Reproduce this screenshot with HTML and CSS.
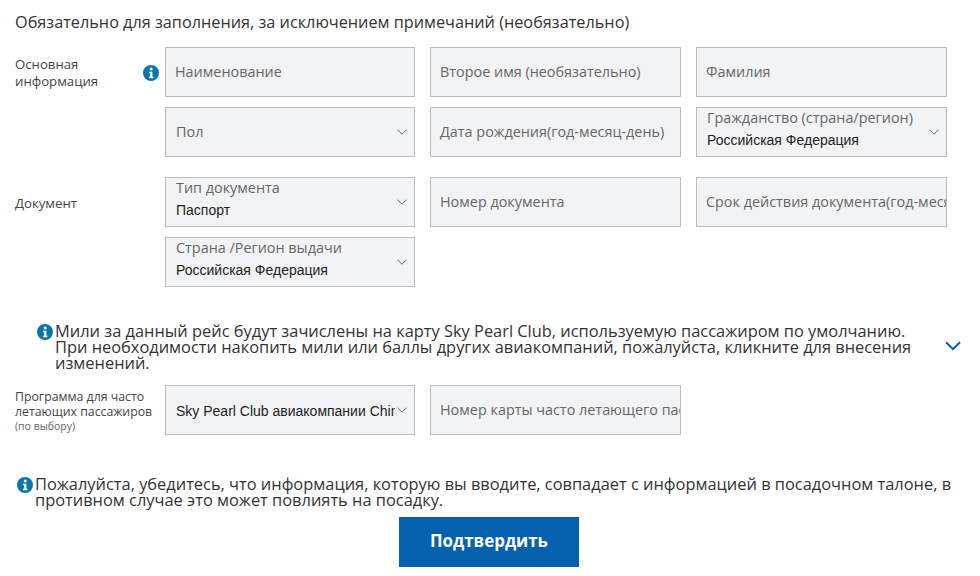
FILE: index.html
```html
<!DOCTYPE html>
<html lang="ru">
<head>
<meta charset="utf-8">
<title>Форма</title>
<link rel="stylesheet" href="styles.css">
</head>
<body>
<svg class="defs" width="0" height="0">
  <symbol id="info" viewBox="0 0 16 16">
    <circle cx="8" cy="8" r="8" fill="#0b77a8"/>
    <circle cx="8.2" cy="4.1" r="1.5" fill="#fff"/>
    <path d="M5.9 6.8h3.5v5h1v1.5H6v-1.5h1.1V8.3H5.9z" fill="#fff"/>
  </symbol>
  <symbol id="chev" viewBox="0 0 10 6">
    <path d="M.5.7 5 5.2 9.5.7" fill="none" stroke="#666" stroke-width="1"/>
  </symbol>
</svg>
<main class="page">
  <p class="title">Обязательно для заполнения, за исключением примечаний (необязательно)</p>

  <section class="group">
    <div class="label"><span>Основная<br>информация</span><svg class="info"><use href="#info"/></svg></div>
    <div class="fields">
      <div class="field">Наименование</div>
      <div class="field">Второе имя (необязательно)</div>
      <div class="field">Фамилия</div>
      <div class="field select"><span class="text">Пол</span><svg class="chev"><use href="#chev"/></svg></div>
      <div class="field">Дата рождения(год-месяц-день)</div>
      <div class="field select"><div class="stack"><div class="cap">Гражданство (страна/регион)</div><div class="val">Российская Федерация</div></div><svg class="chev"><use href="#chev"/></svg></div>
    </div>
  </section>

  <section class="group doc">
    <div class="label"><span>Документ</span></div>
    <div class="fields">
      <div class="field select"><div class="stack"><div class="cap">Тип документа</div><div class="val">Паспорт</div></div><svg class="chev"><use href="#chev"/></svg></div>
      <div class="field">Номер документа</div>
      <div class="field">Срок действия документа(год-месяц-день)</div>
      <div class="field select"><div class="stack"><div class="cap">Страна /Регион выдачи</div><div class="val">Российская Федерация</div></div><svg class="chev"><use href="#chev"/></svg></div>
    </div>
  </section>

  <div class="notice miles">
    <svg class="info"><use href="#info"/></svg>
    <p>Мили за данный рейс будут зачислены на карту Sky Pearl Club, используемую пассажиром по умолчанию. При необходимости накопить мили или баллы других авиакомпаний, пожалуйста, кликните для внесения изменений.</p>
    <svg class="big-chev" viewBox="0 0 16 10"><path d="M1 1.2 8 8.2 15 1.2" fill="none" stroke="#0b5ea8" stroke-width="2"/></svg>
  </div>

  <section class="group ffp">
    <div class="label small"><span>Программа для часто<br>летающих пассажиров<br><small>(по выбору)</small></span></div>
    <div class="fields">
      <div class="field select"><span class="text val">Sky Pearl Club авиакомпании China Southern</span><svg class="chev"><use href="#chev"/></svg></div>
      <div class="field">Номер карты часто летающего пассажира</div>
    </div>
  </section>

  <div class="notice warn">
    <svg class="info"><use href="#info"/></svg>
    <p>Пожалуйста, убедитесь, что информация, которую вы вводите, совпадает с информацией в посадочном талоне, в противном случае это может повлиять на посадку.</p>
  </div>

  <div class="actions"><button class="confirm" type="button">Подтвердить</button></div>
</main>
</body>
</html>
```
FILE: styles.css
```css
* { box-sizing: border-box; }
html, body { margin: 0; background: #fff; }
body { font-family: "Open Sans", "Noto Sans", sans-serif; color: #333; overflow: hidden; }
.defs { position: absolute; }
.page { width: 980px; height: 576px; padding: 13px 0 0 15px; }
.title { margin: 0 0 16px; font-size: 16.25px; line-height: 18px; }
.group { display: flex; }
.doc { margin-top: 20px; }
.ffp { margin-top: 14px; }
.label { width: 150px; height: 50px; flex: none; display: flex; align-items: center; justify-content: space-between; padding-top: 1px; padding-right: 6px; font-size: 13.2px; line-height: 17px; color: #444; }
.doc .label { padding-top: 3px; }
.label.small { font-size: 12.3px; line-height: 15px; padding-top: 3px; }
.label small { font-size: 10.5px; line-height: 15px; color: #666; display: block; }
.info { width: 16px; height: 16px; flex: none; }
.fields { display: grid; grid-template-columns: 250px 251px 251px; gap: 10px 15px; }
.field { height: 50px; background: #f2f3f5; border: 1px solid #bbb; padding: 0 0 2px 9px; display: flex; align-items: center; font-size: 14.4px; color: #666; overflow: hidden; white-space: nowrap; }
.select { justify-content: space-between; padding: 0 7px 0 9px; }
.text { min-width: 0; overflow: hidden; padding-left: 1px; }
.select > span.text { padding-bottom: 1px; }
.stack { min-width: 0; padding-left: 1px; margin-bottom: 6px; }
.cap { font-size: 14.4px; line-height: 20px; }
.val { font-family: "Liberation Sans", Arial, sans-serif; font-size: 14px; line-height: 20px; color: #222; margin-top: 2px; }
.chev { width: 10px; height: 6px; flex: none; margin-left: 2px; }
.notice { display: flex; font-size: 16.4px; line-height: 16px; }
.notice p { margin: 0; }
.miles { margin-top: 36px; padding-left: 22px; height: 48px; }
.miles p { width: 870px; }
.miles .info { margin-top: 1px; margin-right: 2px; }
.big-chev { width: 16px; height: 10px; margin: 18px 0 0 20px; flex: none; }
.warn { margin-top: 41px; padding-left: 2px; }
.warn p { width: 920px; }
.warn .info { margin-top: 1px; margin-right: 2px; }
.actions { width: 950px; margin-top: 9px; display: flex; padding-left: 384px; }
.confirm { width: 180px; height: 50px; border: 0; padding: 0 0 3px; background: #0560ad; color: #fff; font: 700 16.9px "Open Sans", sans-serif; }
```
